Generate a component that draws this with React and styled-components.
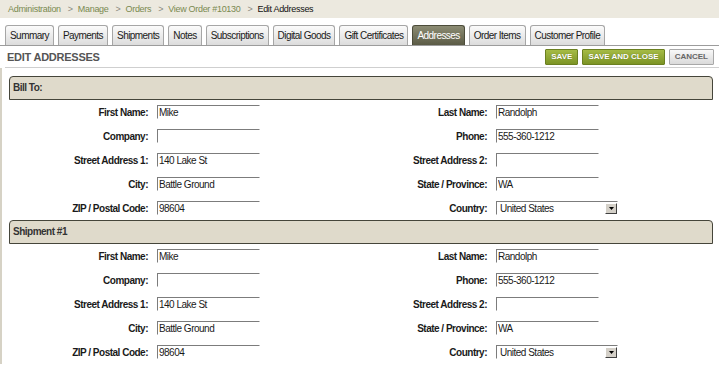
import React from 'react';
import styled, { createGlobalStyle } from 'styled-components';

const GlobalStyle = createGlobalStyle`
  body {
    margin: 0;
    background: #fff;
    font-family: "Liberation Sans", Arial, sans-serif;
    color: #1a1a1a;
  }
`;

const crumbs = ['Administration', 'Manage', 'Orders', 'View Order #10130'];

const tabs = [
  'Summary',
  'Payments',
  'Shipments',
  'Notes',
  'Subscriptions',
  'Digital Goods',
  'Gift Certificates',
  'Addresses',
  'Order Items',
  'Customer Profile',
];

const address = {
  firstName: 'Mike',
  lastName: 'Randolph',
  company: '',
  phone: '555-360-1212',
  street1: '140 Lake St',
  street2: '',
  city: 'Battle Ground',
  state: 'WA',
  zip: '98604',
  country: 'United States',
};

const sections = [
  { title: 'Bill To:', data: address },
  { title: 'Shipment #1', data: address },
];

// rows: [left label, left key], [right label, right key]
const rows = [
  [['First Name:', 'firstName'], ['Last Name:', 'lastName']],
  [['Company:', 'company'], ['Phone:', 'phone']],
  [['Street Address 1:', 'street1'], ['Street Address 2:', 'street2']],
  [['City:', 'city'], ['State / Province:', 'state']],
  [['ZIP / Postal Code:', 'zip'], ['Country:', 'country']],
];

const App = () => {
  return (
    <>
      <GlobalStyle />
      <Breadcrumb>
        {crumbs.map((c) => (
          <React.Fragment key={c}>
            <CrumbLink>{c}</CrumbLink>
            <Sep>&gt;</Sep>
          </React.Fragment>
        ))}
        <CrumbCurrent>Edit Addresses</CrumbCurrent>
      </Breadcrumb>

      <TabBar>
        {tabs.map((t) => (
          <Tab key={t} $active={t === 'Addresses'}>{t}</Tab>
        ))}
      </TabBar>

      <TitleBar>
        <Title>EDIT ADDRESSES</Title>
        <Actions>
          <ActionButton $primary>SAVE</ActionButton>
          <ActionButton $primary>SAVE AND CLOSE</ActionButton>
          <ActionButton>CANCEL</ActionButton>
        </Actions>
      </TitleBar>

      <Content>
        {sections.map((s) => (
          <Section key={s.title}>
            <SectionHeader>{s.title}</SectionHeader>
            <FormGrid>
              {rows.map((pair) =>
                pair.map(([label, key]) => (
                  <React.Fragment key={label}>
                    <Label>{label}</Label>
                    <Field>
                      {key === 'country' ? (
                        <SelectBox>
                          <SelectText>{s.data[key]}</SelectText>
                          <SelectArrow>
                            <svg width="5" height="3" viewBox="0 0 5 3">
                              <path d="M0 0h5L2.5 3z" fill="#000" />
                            </svg>
                          </SelectArrow>
                        </SelectBox>
                      ) : (
                        <TextInput type="text" defaultValue={s.data[key]} />
                      )}
                    </Field>
                  </React.Fragment>
                ))
              )}
            </FormGrid>
          </Section>
        ))}
      </Content>
    </>
  );
};

const Breadcrumb = styled.div`
  height: 18px;
  line-height: 18px;
  background: #ece9df;
  padding-left: 8px;
  font-size: 9px;
  letter-spacing: -0.3px;
  display: flex;
  white-space: nowrap;
`;

const CrumbLink = styled.span`
  color: #7a8a50;
`;

const Sep = styled.span`
  color: #8a8a80;
  margin: 0 5px 0 7px;
`;

const CrumbCurrent = styled.span`
  color: #111;
`;

const TabBar = styled.div`
  display: flex;
  gap: 4px;
  margin-top: 7px;
  padding-left: 5px;
  border-bottom: 1px solid #9c9c9c;
`;

const Tab = styled.div`
  height: 20px;
  line-height: 20px;
  box-sizing: border-box;
  padding: 0 4px;
  font-size: 10px;
  letter-spacing: -0.55px;
  white-space: nowrap;
  border: 1px solid ${(p) => (p.$active ? '#4c4c3a' : '#a6a6a6')};
  border-bottom: none;
  border-radius: 3px 3px 0 0;
  color: ${(p) => (p.$active ? '#fff' : '#1a1a1a')};
  background: ${(p) =>
    p.$active
      ? 'linear-gradient(#8c8c74, #5b5b45)'
      : 'linear-gradient(#fbfbfb, #dcdcdc)'};
`;

const TitleBar = styled.div`
  display: flex;
  align-items: center;
  justify-content: space-between;
  height: 21px;
  margin-left: 5px;
  padding: 0 5px 0 2px;
  border-bottom: 1px solid #cfcfcf;
`;

const Title = styled.div`
  font-size: 11px;
  font-weight: bold;
  letter-spacing: -0.25px;
  color: #555;
`;

const Actions = styled.div`
  display: flex;
  gap: 4px;
`;

const ActionButton = styled.button`
  height: 16px;
  padding: 0 5px;
  font-family: "Liberation Sans", Arial, sans-serif;
  font-size: 8px;
  font-weight: bold;
  line-height: 14px;
  border-radius: 1px;
  cursor: pointer;
  border: 1px solid ${(p) => (p.$primary ? '#6b8020' : '#a8a8a8')};
  color: ${(p) => (p.$primary ? '#fff' : '#666')};
  background: ${(p) =>
    p.$primary
      ? 'linear-gradient(#a5bb45, #7c9425)'
      : 'linear-gradient(#f8f8f8, #dadada)'};
  text-shadow: ${(p) => (p.$primary ? '0 0 1px rgba(60,70,10,0.6)' : 'none')};
`;

const Content = styled.div`
  border-left: 2px solid #d6d2c5;
  padding: 8px 6px 0 7px;
`;

const Section = styled.div``;

const SectionHeader = styled.div`
  height: 24px;
  box-sizing: border-box;
  line-height: 22px;
  padding-left: 3px;
  background: #dfdacb;
  border: 1px solid #45453a;
  border-radius: 4px 4px 0 0;
  font-size: 10px;
  font-weight: bold;
  letter-spacing: -0.5px;
  color: #333;
`;

const FormGrid = styled.div`
  display: grid;
  grid-template-columns: 148px 191px 148px 1fr;
  grid-auto-rows: 24px;
  align-items: center;
`;

const Label = styled.div`
  text-align: right;
  padding-right: 9px;
  font-size: 10px;
  font-weight: bold;
  letter-spacing: -0.5px;
  color: #1a1a1a;
  white-space: nowrap;
`;

const Field = styled.div`
  display: flex;
  align-items: center;
`;

const TextInput = styled.input`
  width: 103px;
  height: 14px;
  box-sizing: border-box;
  margin: 0;
  padding: 0 1px;
  border: 1px solid #fff;
  border-top-color: #7c7c7c;
  border-left-color: #7c7c7c;
  font-family: "Liberation Sans", Arial, sans-serif;
  font-size: 10px;
  letter-spacing: -0.5px;
  color: #1a1a1a;
  outline: none;
`;

const SelectBox = styled.div`
  width: 122px;
  height: 14px;
  box-sizing: border-box;
  display: flex;
  align-items: center;
  justify-content: space-between;
  border: 1px solid #fff;
  border-top-color: #7c7c7c;
  border-left-color: #7c7c7c;
  padding: 0 0 0 3px;
`;

const SelectText = styled.span`
  font-size: 10px;
  letter-spacing: -0.5px;
  color: #1a1a1a;
`;

const SelectArrow = styled.span`
  width: 12px;
  height: 11px;
  box-sizing: border-box;
  display: flex;
  align-items: center;
  justify-content: center;
  background: #d4d0c8;
  border: 1px solid;
  border-color: #fff #404040 #404040 #fff;
`;

export default App;
